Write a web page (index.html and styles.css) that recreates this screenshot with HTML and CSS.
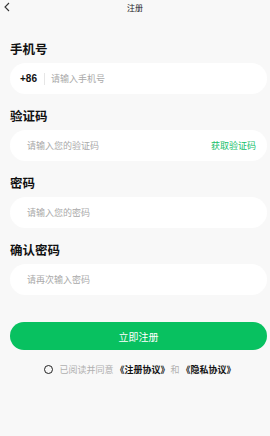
FILE: index.html
```html
<!DOCTYPE html>
<html lang="zh-CN">
<head>
    <meta charset="UTF-8">
    <meta name="viewport" content="width=device-width, initial-scale=1.0">
    <title>注册</title>
    <link rel="stylesheet" href="styles.css">
</head>
<body>
    <div class="topbar">
        <svg class="backicon" width="8" height="10" viewBox="0 0 8 10">
            <path d="M6 1 L2 5 L6 9" fill="none" stroke="#333" stroke-width="1.1"/>
        </svg>
        <span class="pagetitle">注册</span>
    </div>

    <div class="form">
        <p class="label">手机号</p>
        <div class="inputbox">
            <span class="areacode">+86</span>
            <span class="divider"></span>
            <span class="placeholder">请输入手机号</span>
        </div>

        <p class="label">验证码</p>
        <div class="inputbox padded">
            <span class="placeholder">请输入您的验证码</span>
            <span class="getcode">获取验证码</span>
        </div>

        <p class="label">密码</p>
        <div class="inputbox padded">
            <span class="placeholder">请输入您的密码</span>
        </div>

        <p class="label">确认密码</p>
        <div class="inputbox padded">
            <span class="placeholder">请再次输入密码</span>
        </div>

        <button class="registerbutton">立即注册</button>

        <div class="agreement">
            <span class="checkcircle"></span>
            <span class="graytext">已阅读并同意</span>
            <b>《注册协议》</b>
            <span class="graytext">和</span>
            <b>《隐私协议》</b>
        </div>
    </div>
</body>
</html>
```

FILE: styles.css
```css
body{
    margin:0;
    background-color:#f8f8f8;
    font-family:"Noto Sans CJK SC","Liberation Sans",sans-serif;
    color:#111;
}

.topbar{
    position:relative;
    height:14px;
    display:flex;
    align-items:center;
    justify-content:center;
}

.backicon{
    position:absolute;
    left:3px;
    top:2px;
}

.pagetitle{
    font-size:8px;
    color:#222;
}

.form{
    padding:0 3px 0 10px;
}

.label{
    margin:27px 0 0 0;
    font-size:12.5px;
    font-weight:bold;
    line-height:16px;
    height:16px;
}

.label + .inputbox{
    margin-top:6px;
}

.form .inputbox ~ .label{
    margin-top:14px;
}

.inputbox{
    height:31px;
    background:#fff;
    border-radius:16px;
    display:flex;
    align-items:center;
    font-size:9px;
    padding:0 10px;
}

.padded{
    padding-left:17px;
}

.areacode{
    font-family:"Liberation Sans",sans-serif;
    font-weight:bold;
    font-size:10px;
    color:#111;
}

.divider{
    width:1px;
    height:12px;
    background:#e6e6e6;
    margin:0 6px 0 7px;
}

.placeholder{
    color:#a9a9a9;
    flex:1;
}

.getcode{
    color:#14c06a;
    font-size:9px;
    margin-right:1px;
}

.registerbutton{
    display:block;
    width:100%;
    height:28px;
    margin-top:27px;
    border:none;
    border-radius:14px;
    background:#08c160;
    color:#fff;
    font-family:"Noto Sans CJK SC",sans-serif;
    font-size:10px;
}

.agreement{
    margin-top:13px;
    display:flex;
    align-items:center;
    justify-content:center;
    font-size:9px;
    padding-left:4px;
}

.checkcircle{
    width:7px;
    height:7px;
    border:1.3px solid #222;
    border-radius:50%;
    margin-right:6px;
}

.graytext{
    color:#b0b0b0;
}

.agreement b{
    color:#111;
    margin:0 1px 0 2px;
}
```
